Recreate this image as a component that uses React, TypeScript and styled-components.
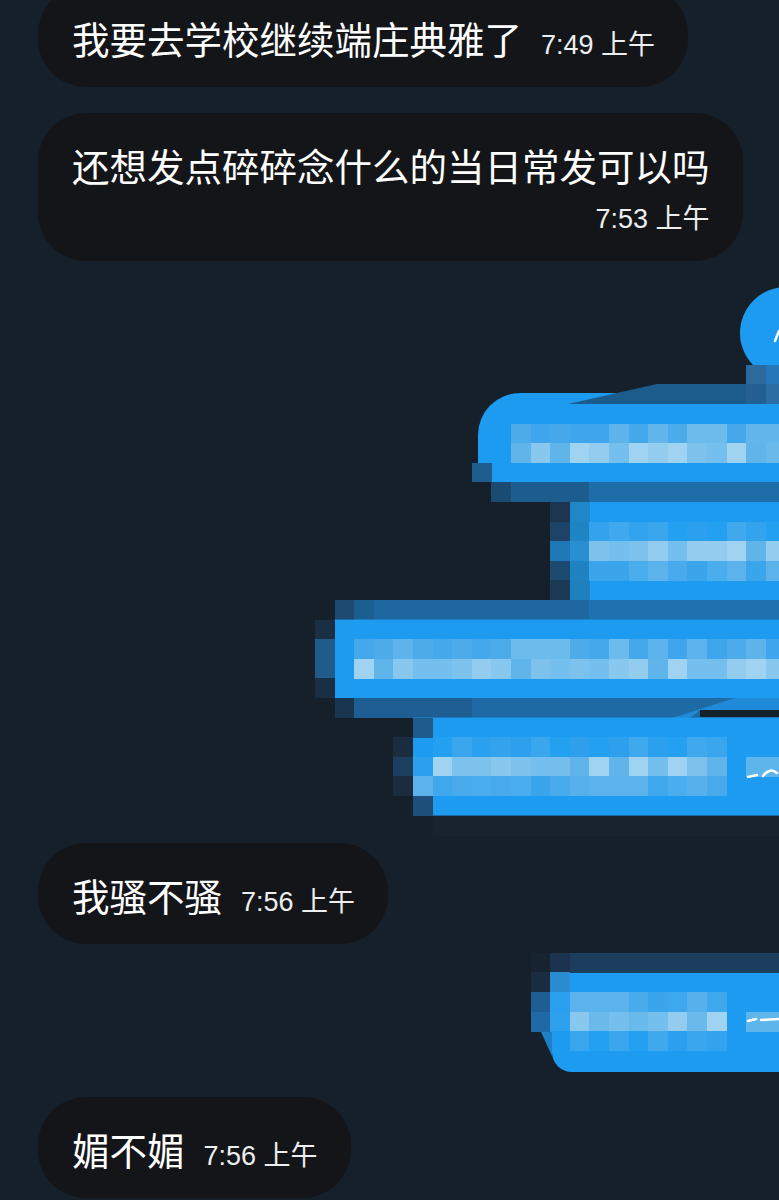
import React from "react";
import styled, { createGlobalStyle } from "styled-components";

const BG = "#16202b";
const BLUE = "#1d9bf0";

const GlobalStyle = createGlobalStyle`
  html, body {
    margin: 0;
    padding: 0;
    background: ${BG};
  }
  body {
    width: 779px;
    height: 1200px;
    overflow: hidden;
    font-family: "Noto Sans CJK SC", sans-serif;
  }
`;

const Thread = styled.main`
  display: flex;
  flex-direction: column;
  width: 779px;
  margin-top: -14px;
`;

const IncomingRow = styled.div<{ $top: number }>`
  display: flex;
  justify-content: flex-start;
  padding-left: 38px;
  margin-top: ${(p) => p.$top}px;
`;

const Bubble = styled.div<{ $stacked?: boolean }>`
  display: flex;
  flex-direction: ${(p) => (p.$stacked ? "column" : "row")};
  align-items: ${(p) => (p.$stacked ? "stretch" : "baseline")};
  background: #141518;
  color: #ffffff;
  border-radius: 48px;
  padding: 28px 33px ${(p) => (p.$stacked ? 28 : 25)}px 34px;
`;

const MessageText = styled.span`
  font-family: "Noto Sans CJK SC", sans-serif;
  font-size: 37.5px;
  line-height: 48px;
  white-space: nowrap;
`;

const Time = styled.span<{ $stacked?: boolean }>`
  font-family: "Liberation Sans", "Noto Sans CJK SC", sans-serif;
  font-size: 27px;
  line-height: 27px;
  color: #eceef0;
  white-space: nowrap;
  margin-left: ${(p) => (p.$stacked ? 0 : 19)}px;
  margin-top: ${(p) => (p.$stacked ? 17 : 0)}px;
  align-self: ${(p) => (p.$stacked ? "flex-end" : "auto")};
`;

const Censored = styled.svg<{ $top: number }>`
  display: block;
  width: 779px;
  flex: none;
  margin-top: ${(p) => p.$top}px;
`;

/* ---------- pixelation grid ---------- */
const C = 19.6;
const OX = 315;
const OY = 600;
const gx = (i: number) => OX + i * C;
const gy = (j: number) => OY + j * C;

const PAL = {
  mild: ["#2aa0ee", "#33a3ee", "#3aa6ee", "#24a0f0", "#40a8ec", "#2e9fec"],
  mid: ["#48aaeb", "#55b0ec", "#3fa7ec", "#5cb3ec", "#4aaeee", "#3aa5ea"],
  light: ["#7cc2ed", "#6ab9eb", "#88c8ef", "#74bfee", "#93ccef", "#5fb4ea", "#a0d3f1"],
  medLight: ["#4eabe9", "#5db3eb", "#62b6ec", "#45a8eb", "#6cbbed", "#3fa5ec"],
};

function pick(pal: string[], i: number, j: number) {
  let h = (i * 374761393 + j * 668265263) | 0;
  h = Math.imul(h ^ (h >>> 13), 1274126177);
  h = h ^ (h >>> 16);
  return pal[(h >>> 0) % pal.length];
}

type Cell = { i: number; j: number; fill: string };
const run = (j: number, i0: number, i1: number, fill: string | string[]): Cell[] => {
  const out: Cell[] = [];
  for (let i = i0; i <= i1; i++) {
    out.push({ i, j, fill: typeof fill === "string" ? fill : pick(fill, i, j) });
  }
  return out;
};
const one = (i: number, j: number, fill: string): Cell => ({ i, j, fill });
const column = (i: number, j0: number, fills: string[]): Cell[] =>
  fills.map((fill, k) => ({ i, j: j0 + k, fill }));

const Cells: React.FC<{ list: Cell[] }> = ({ list }) => (
  <g shapeRendering="crispEdges">
    {list.map((c, k) => (
      <rect key={k} x={gx(c.i)} y={gy(c.j)} width={C + 0.4} height={C + 0.4} fill={c.fill} />
    ))}
  </g>
);

const CensoredUpper: React.FC = () => (
  <Censored $top={9} viewBox="0 270 779 570" width={779} height={570}>
    {/* topmost outgoing bubble, mostly off-screen */}
    <rect x={740} y={287} width={100} height={92} rx={46} fill={BLUE} />
    <path d="M775 341 L779 331" stroke="#ffffff" strokeWidth={2.5} strokeLinecap="round" />
    <Cells list={[one(22, -12, "#2a6a9c"), one(23, -12, "#2478b8")]} />

    {/* second bubble */}
    <path d="M478 435 A42 42 0 0 1 520 393 H779 V502 H478 Z" fill={BLUE} />
    <polygon points="657,384 779,384 779,404 568,404" fill="#1c5c8d" />
    <Cells
      list={[
        one(22, -11, "#235f92"),
        one(23, -11, "#2a6ea3"),
        ...run(-9, 10, 23, PAL.medLight),
        ...run(-8, 10, 23, PAL.light),
        one(8, -7, "#1f5d8c"),
        one(8, -6, BG),
        one(9, -6, "#1b4a72"),
        ...run(-6, 10, 13, "#1c5c8e"),
        ...run(-6, 14, 23, "#1e6ca8"),
      ]}
    />

    {/* third bubble */}
    <rect x={gx(13)} y={gy(-5)} width={779 - gx(13)} height={C * 5} fill={BLUE} />
    <Cells
      list={[
        ...column(12, -5, ["#1c3550", "#1d4468", "#1f78b5", "#1d4a70", "#1c3a56"]),
        ...column(13, -5, ["#1f86c8", "#1f84c4", "#2a8fd0", "#1f82c2", "#1f80c0"]),
        ...run(-4, 14, 23, PAL.mild),
        ...run(-3, 14, 23, PAL.light),
        ...run(-2, 14, 23, PAL.mid),
        one(1, 0, "#1c4a70"),
        one(2, 0, "#1d5e91"),
        ...run(0, 3, 13, "#1e67a0"),
        ...run(0, 14, 23, "#1f72b0"),
      ]}
    />

    {/* fourth (widest) bubble */}
    <rect x={gx(1)} y={gy(1)} width={779 - gx(1)} height={C * 4} fill={BLUE} />
    <Cells
      list={[
        one(0, 1, "#1b2f44"),
        one(0, 2, "#1f5c8a"),
        one(0, 3, "#1f5c8a"),
        one(0, 4, "#1b2f44"),
        ...run(2, 2, 23, PAL.medLight),
        ...run(3, 2, 23, PAL.light),
        one(1, 5, "#1a3550"),
        ...run(5, 2, 7, "#1e5e92"),
        ...run(5, 8, 23, "#1e6aa4"),
      ]}
    />
    <polygon points="672,718 735,698 779,698 779,710 700,710 690,718" fill="#1f8ad8" />
    <rect x={700} y={710} width={79} height={7} fill={BG} />

    {/* fifth bubble */}
    <rect x={gx(5)} y={gy(6)} width={779 - gx(5)} height={C * 5} fill={BLUE} />
    <Cells
      list={[
        one(5, 6, "#1d5b8d"),
        one(4, 7, "#1b2c3f"),
        ...run(7, 6, 20, PAL.mild),
        one(4, 8, "#1c3f60"),
        one(5, 8, "#2aa0ee"),
        ...run(8, 6, 20, PAL.light),
        ...run(8, 22, 23, "#5db5ec"),
        one(4, 9, "#1b2c3f"),
        ...run(9, 5, 20, PAL.mid),
        one(5, 10, "#1d4f7a"),
        ...run(11, 6, 23, "#18232f"),
      ]}
    />
    <path
      d="M748 777 L757 775 M763 776 Q770 767 777 773"
      stroke="#ffffff"
      strokeWidth={2.5}
      fill="none"
      strokeLinecap="round"
    />
  </Censored>
);

const CensoredLower: React.FC = () => (
  <Censored $top={1} viewBox="0 945 779 135" width={779} height={135}>
    <path d="M552 973 H779 V1072 H572 A20 20 0 0 1 552 1052 Z" fill={BLUE} />
    <Cells
      list={[
        one(11, 18, "#172330"),
        one(12, 18, "#1b3350"),
        ...run(18, 13, 23, "#1b3e5e"),
        one(11, 19, "#1a2d40"),
        one(12, 19, "#2a8bd0"),
        one(11, 20, "#1e5e92"),
        one(12, 20, "#2a9ff0"),
        ...run(20, 13, 20, PAL.mid),
        one(11, 21, "#1f6aa6"),
        one(12, 21, "#2da0ee"),
        ...run(21, 13, 20, PAL.light),
        ...run(21, 22, 23, "#5db5ec"),
        one(12, 22, BLUE),
        ...run(22, 13, 20, PAL.mild),
      ]}
    />
    <path d="M541 1032 L552 1032 L552 1056 Z" fill="#1d80c8" />
    <path
      d="M748 1021 L756 1019 M761 1020 L779 1019"
      stroke="#ffffff"
      strokeWidth={2.5}
      fill="none"
      strokeLinecap="round"
    />
  </Censored>
);

type Incoming = { text: string; time: string; stacked?: boolean; top: number };

const Message: React.FC<Incoming> = ({ text, time, stacked, top }) => (
  <IncomingRow $top={top}>
    <Bubble $stacked={stacked}>
      <MessageText>{text}</MessageText>
      <Time $stacked={stacked}>{time}</Time>
    </Bubble>
  </IncomingRow>
);

export default function App() {
  return (
    <>
      <GlobalStyle />
      <Thread>
        <Message top={0} text="我要去学校继续端庄典雅了" time="7:49 上午" />
        <Message top={26} text="还想发点碎碎念什么的当日常发可以吗" time="7:53 上午" stacked />
        <CensoredUpper />
        <Message top={3} text="我骚不骚" time="7:56 上午" />
        <CensoredLower />
        <Message top={17} text="媚不媚" time="7:56 上午" />
      </Thread>
    </>
  );
}
